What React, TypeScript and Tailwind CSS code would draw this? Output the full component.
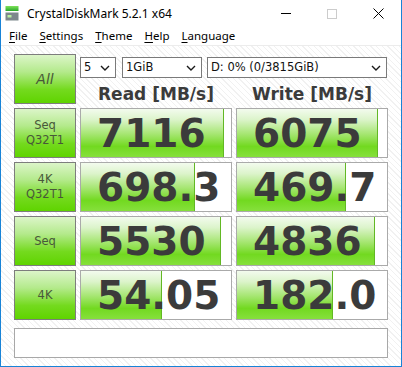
import React from 'react'

type Row = { label: string[]; read: number; write: number; readText: string; writeText: string }

const rows: Row[] = [
  { label: ['Seq', 'Q32T1'], read: 7116, write: 6075, readText: '7116', writeText: '6075' },
  { label: ['4K', 'Q32T1'], read: 698.3, write: 469.7, readText: '698.3', writeText: '469.7' },
  { label: ['Seq'], read: 5530, write: 4836, readText: '5530', writeText: '4836' },
  { label: ['4K'], read: 54.05, write: 182.0, readText: '54.05', writeText: '182.0' },
]

// log scaled meter, like the original app
const fill = (v: number) => Math.min(100, 19.9 + Math.log10(v) * 19.65)

function Chevron() {
  return (
    <svg width="10" height="6" viewBox="0 0 10 6" className="shrink-0">
      <path d="M1 1 L5 5 L9 1" fill="none" stroke="#1a1a1a" strokeWidth="1.4" />
    </svg>
  )
}

function Combo({ text, className }: { text: string; className: string }) {
  return (
    <div className={`h-[21px] bg-white border border-[#7a7a7a] flex items-center justify-between pl-[3px] pr-[5px] text-[11.5px] text-[#111] ${className}`}>
      <span>{text}</span>
      <Chevron />
    </div>
  )
}

function LabelButton({ lines, big }: { lines: string[]; big?: boolean }) {
  return (
    <div className="w-[62px] h-[50px] shrink-0 border border-[#7d7d7d] bg-[linear-gradient(to_bottom,#dcf5c9_0%,#b4ea8c_35%,#74da1e_72%,#5fd400_100%)] flex flex-col items-center justify-center text-[#48583a]">
      {big ? (
        <span className="text-[14px] italic">{lines[0]}</span>
      ) : (
        lines.map((l) => (
          <span key={l} className="text-[11.5px] leading-[15px]">{l}</span>
        ))
      )}
    </div>
  )
}

function Meter({ value, text, w }: { value: number; text: string; w: string }) {
  return (
    <div className={`relative h-[50px] ${w} shrink-0 border border-[#aaaaaa] bg-white flex items-center`}>
      <div
        className="absolute left-0 top-0 bottom-0 border-r border-[#62b824] bg-[linear-gradient(to_bottom,#f3fbee_0%,#dcf4cb_22%,#a6e672_52%,#72d920_78%,#86e03c_100%)]"
        style={{ width: `${fill(value)}%` }}
      />
      <span className="relative pl-[16px] text-[39px] leading-none font-bold text-[#3b3b3b]">{text}</span>
    </div>
  )
}

export default function App() {
  return (
    <div className="w-[402px] h-[367px] bg-white border-x border-b border-[#1883d7] flex flex-col font-['DejaVu_Sans',sans-serif] overflow-hidden">
      {/* Title bar */}
      <div className="h-[27px] flex items-center shrink-0">
        <svg width="14" height="15" viewBox="0 0 14 15" className="ml-[4px] mr-[8px] shrink-0">
          <defs>
            <linearGradient id="gt" x1="0" y1="0" x2="0" y2="1">
              <stop offset="0" stopColor="#7fe25a" />
              <stop offset="1" stopColor="#2aa82a" />
            </linearGradient>
          </defs>
          <rect x="0.5" y="0" width="13" height="5" fill="url(#gt)" />
          <rect x="0.5" y="6.5" width="13" height="8" fill="#7d878c" />
          <rect x="2.5" y="9" width="4" height="2.5" fill="#b8f0a0" />
        </svg>
        <span className="font-['Noto_Sans',sans-serif] text-[12px] text-black">CrystalDiskMark 5.2.1 x64</span>
        <div className="ml-auto flex h-full">
          <div className="w-[46px] flex items-center justify-center">
            <div className="w-[10px] h-px bg-black" />
          </div>
          <div className="w-[46px] flex items-center justify-center">
            <div className="w-[10px] h-[10px] border border-[#cccccc]" />
          </div>
          <div className="w-[46px] flex items-center justify-center">
            <svg width="11" height="11" viewBox="0 0 11 11">
              <path d="M0.5 0.5 L10.5 10.5 M10.5 0.5 L0.5 10.5" stroke="#000" strokeWidth="1" />
            </svg>
          </div>
        </div>
      </div>

      {/* Menu */}
      <div className="h-[18px] shrink-0 flex items-center pl-[2px] font-['Noto_Sans',sans-serif] text-[11.5px] text-black">
        {['File', 'Settings', 'Theme', 'Help', 'Language'].map((m) => (
          <span key={m} className="px-[6px]">
            <span className="underline underline-offset-2">{m[0]}</span>
            {m.slice(1)}
          </span>
        ))}
      </div>
      <div className="h-px shrink-0 bg-[#ececec]" />

      {/* Client */}
      <div className="flex-1 flex flex-col gap-[4px] pl-[13px] pt-[8px] pb-[8px] bg-[repeating-linear-gradient(45deg,#ffffff_0px,#ffffff_3px,#f1f1f1_3px,#f1f1f1_4px)]">
        <div className="flex gap-[4px] h-[50px]">
          <LabelButton lines={['All']} big />
          <div className="flex flex-col">
            <div className="flex gap-[6px] mt-[3px]">
              <Combo text="5" className="w-[36px]" />
              <Combo text="1GiB" className="w-[80px]" />
              <Combo text="D: 0% (0/3815GiB)" className="w-[180px] ml-[-1px]" />
            </div>
            <div className="flex gap-[4px] mt-[6px]">
              <div className="w-[152px] text-center text-[17px] leading-[20px] font-bold text-[#3b3b3b]">Read [MB/s]</div>
              <div className="w-[152px] text-center text-[17px] leading-[20px] font-bold text-[#3b3b3b]">Write [MB/s]</div>
            </div>
          </div>
        </div>

        {rows.map((r) => (
          <div key={r.label.join()} className="flex gap-[4px]">
            <LabelButton lines={r.label} />
            <Meter value={r.read} text={r.readText} w="w-[152px]" />
            <Meter value={r.write} text={r.writeText} w="w-[152px]" />
          </div>
        ))}

        <div className="mt-[4px] w-[374px] h-[30px] bg-white border border-[#a8a8a8]" />
      </div>
    </div>
  )
}
